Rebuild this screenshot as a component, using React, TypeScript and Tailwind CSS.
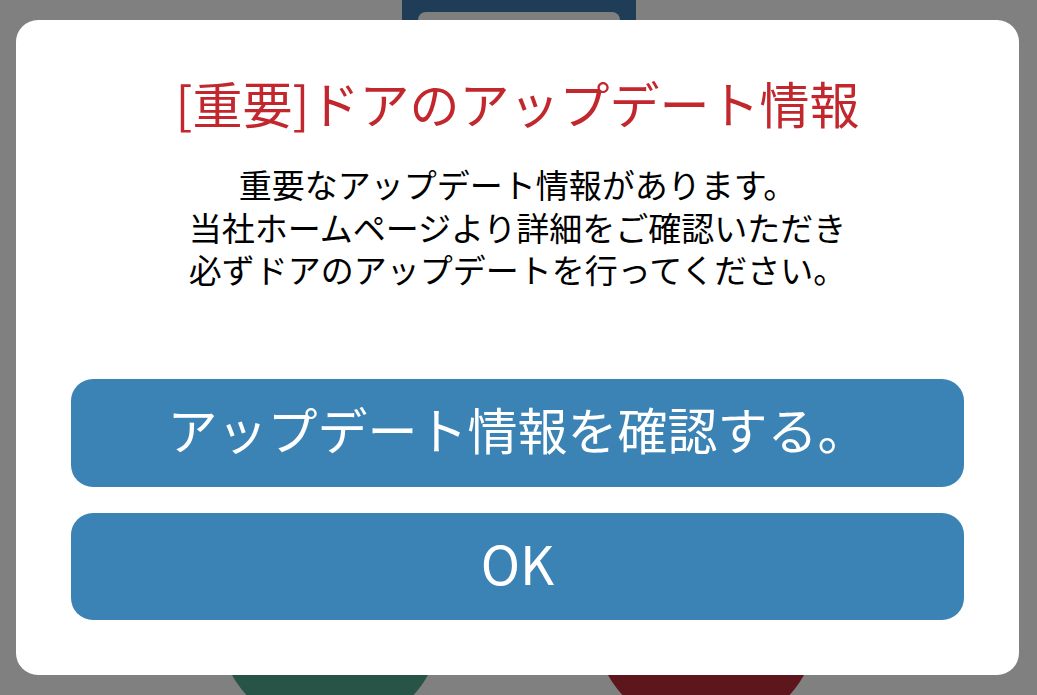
import React from 'react';

const jp = { fontFamily: '"Noto Sans CJK JP", "Noto Sans", sans-serif' };

const bodyLines = [
  '重要なアップデート情報があります。',
  '当社ホームページより詳細をご確認いただき',
  '必ずドアのアップデートを行ってください。',
];

const App: React.FC = () => {
  return (
    <div className="relative h-[695px] w-full overflow-hidden bg-[#808080]" style={jp}>
      {/* dimmed screen behind the dialog */}
      <div className="flex h-full flex-col items-center justify-between">
        <div className="w-[234px] h-[60px] bg-[#1f3d56] px-4 pt-[12px]">
          <div className="h-full rounded-lg bg-[#7f7f7f]" />
        </div>
        <div className="flex gap-[150px] translate-y-[37px] ml-[-1px]">
          <div className="h-[226px] w-[226px] rounded-full bg-[#275446]" />
          <div className="h-[226px] w-[226px] rounded-full bg-[#5d161c]" />
        </div>
      </div>

      {/* Update dialog */}
      <div className="absolute left-[16px] right-[18px] top-[20px] bottom-[20px] flex flex-col rounded-[22px] bg-white px-[55px] pb-[55px]">
        <h1 className="mt-[50px] text-center text-[50px] leading-[64px] font-normal text-[#c1272d]">
          [重要]ドアのアップデート情報
        </h1>
        <div className="mt-[29px] flex flex-col items-center text-[33px] text-black">
          {bodyLines.map((line) => (
            <div key={line} className="h-[42.5px] leading-[42.5px] whitespace-nowrap">
              <span className="inline-block leading-[42px]">{line}</span>
            </div>
          ))}
        </div>
        <div className="mt-auto flex flex-col gap-[26px]">
          <button className="h-[108px] w-full rounded-[22px] bg-[#3b83b5] pb-[10px] text-[50px] leading-none text-white">
            アップデート情報を確認する。
          </button>
          <button className="h-[107px] w-full rounded-[22px] bg-[#3b83b5] pb-[8px] text-[53px] leading-none text-white">
            OK
          </button>
        </div>
      </div>
    </div>
  );
};

export default App;
